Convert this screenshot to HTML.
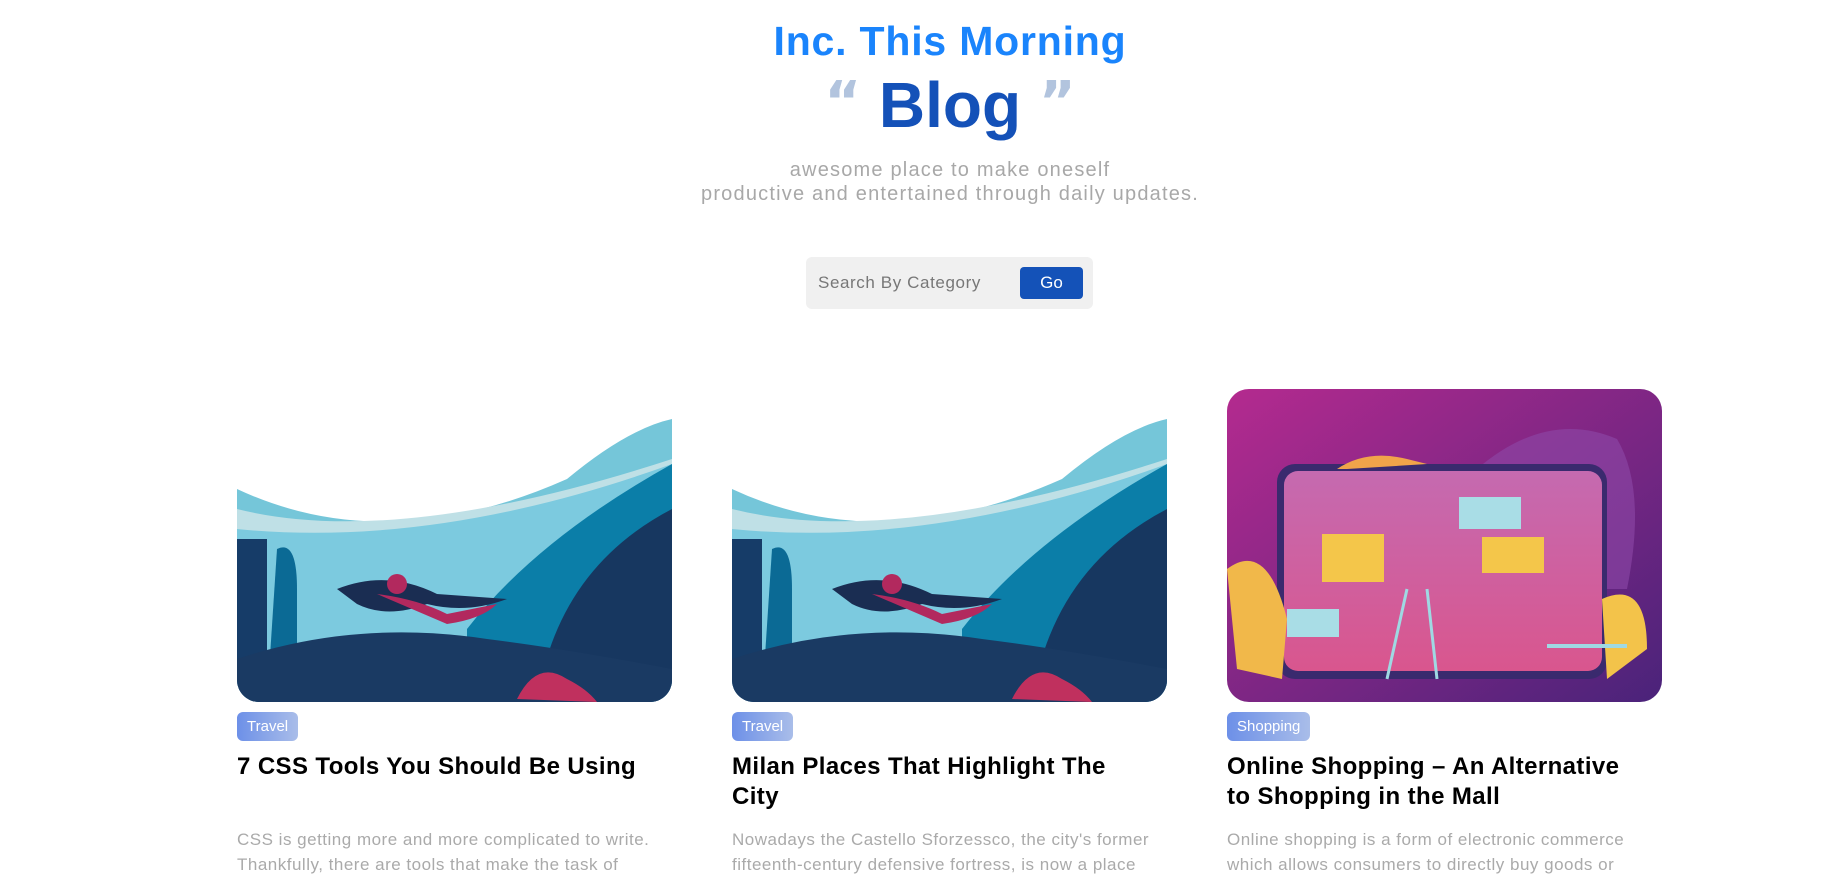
<!DOCTYPE html>
<html><head><meta charset="utf-8"><style>
*{margin:0;padding:0;box-sizing:border-box}
body{width:1843px;height:862px;overflow:hidden;background:#fff;font-family:"Liberation Sans",sans-serif;position:relative}
.a{position:absolute}
h1{position:absolute;left:0;width:1900px;text-align:center;top:18px;font-size:41px;color:#1a84fc;font-weight:bold;letter-spacing:0.8px}
.blog{position:absolute;left:0;width:1900px;text-align:center;top:65px;height:80px;line-height:80px;font-size:64px;font-weight:bold;color:#1451b8}
.q{color:#b2c4de;font-size:56px;position:relative;top:-6px;font-family:"DejaVu Sans",sans-serif;font-weight:bold;line-height:0}
.sub{position:absolute;left:0;width:1900px;text-align:center;top:158px;font-size:20px;color:#a8a8a8;line-height:24px;letter-spacing:1.2px}
.search{left:806px;top:257px;width:287px;height:52px;background:#f0f0f0;border-radius:6px}
.search span{position:absolute;left:12px;top:16px;font-size:17px;color:#777;letter-spacing:0.6px}
.go{position:absolute;left:214px;top:10px;width:63px;height:32px;background:#1452b8;border-radius:4px;color:#fff;font-size:17px;text-align:center;line-height:32px}
.card{position:absolute;top:389px;width:435px}
.img{width:435px;height:313px;border-radius:22px;overflow:hidden}
.tag{display:inline-block;margin-top:10px;height:29px;padding:0 10px;line-height:29px;color:#fff;font-size:15px;border-radius:6px;background:linear-gradient(90deg,#6d90e8,#a9bde9)}
.t{font-size:24px;font-weight:bold;color:#000;line-height:30px;margin-top:11px;height:76px;letter-spacing:0.4px;white-space:nowrap}
.d{font-size:17px;color:#aaa;line-height:25px;margin-top:-1px;letter-spacing:0.5px;white-space:nowrap}
</style></head><body>
<h1>Inc. This Morning</h1>
<div class="blog"><span class="q">“</span> Blog <span class="q">”</span></div>
<div class="sub">awesome place to make oneself<br>productive and entertained through daily updates.</div>
<div class="a search"><span>Search By Category</span><div class="go">Go</div></div>

<svg width="0" height="0" style="position:absolute"><defs>
<g id="sea">
<rect width="435" height="313" fill="#fff"/>
<path d="M0 100 Q150 170 330 90 Q390 40 435 30 V313 H0Z" fill="#75c6d9"/>
<path d="M0 120 Q160 160 435 70 V313 H0Z" fill="#bfe0e6"/>
<path d="M0 140 Q200 160 435 75 V313 H0Z" fill="#7ccadf"/>
<path d="M230 240 Q300 150 435 75 V313 H230Z" fill="#0b7ea8"/>
<path d="M300 313 Q320 180 435 120 V313Z" fill="#173760"/>
<path d="M0 150 H30 V313 H0Z" fill="#163c68"/>
<path d="M40 160 Q60 150 60 200 L60 313 H30Z" fill="#0b6a95"/>
<path d="M0 270 Q120 230 250 250 Q330 260 435 280 V313 H0Z" fill="#1a3a63"/>
<path d="M100 200 Q150 180 200 205 L270 210 Q230 225 190 215 Q150 230 120 215Z" fill="#1a2d52"/>
<path d="M140 205 Q180 210 210 225 L260 215 Q245 230 210 235Z" fill="#b2295e"/>
<circle cx="160" cy="195" r="10" fill="#b2295e"/>
<path d="M280 310 Q300 270 330 290 Q350 300 360 313Z" fill="#c0305e"/>
</g>
</defs></svg>

<div class="card" style="left:237px">
<div class="img"><svg width="435" height="313"><use href="#sea"/></svg></div>
<div class="tag">Travel</div>
<div class="t">7 CSS Tools You Should Be Using</div>
<div class="d">CSS is getting more and more complicated to write.<br>Thankfully, there are tools that make the task of</div>
</div>
<div class="card" style="left:732px">
<div class="img"><svg width="435" height="313"><use href="#sea"/></svg></div>
<div class="tag">Travel</div>
<div class="t">Milan Places That Highlight The<br>City</div>
<div class="d">Nowadays the Castello Sforzessco, the city's former<br>fifteenth-century defensive fortress, is now a place</div>
</div>
<div class="card" style="left:1227px">
<div class="img"><svg width="435" height="313">
<defs><linearGradient id="pg" x1="0" y1="0" x2="1" y2="1"><stop offset="0" stop-color="#b42a8f"/><stop offset="1" stop-color="#4a237a"/></linearGradient>
<linearGradient id="bd" x1="0" y1="0" x2="0" y2="1"><stop offset="0" stop-color="#c56ab0"/><stop offset="1" stop-color="#d9568e"/></linearGradient></defs>
<rect width="435" height="313" fill="url(#pg)"/>
<path d="M250 80 Q320 20 390 50 Q420 100 400 200 L300 200Z" fill="#8e4aa8" opacity=".6"/>
<rect x="50" y="75" width="330" height="215" rx="18" fill="#3a2a6e"/>
<rect x="57" y="82" width="318" height="200" rx="14" fill="url(#bd)"/>
<rect x="95" y="145" width="62" height="48" fill="#f4c64a"/>
<rect x="255" y="148" width="62" height="36" fill="#f4c64a"/>
<rect x="232" y="108" width="62" height="32" fill="#a9dde6"/>
<rect x="60" y="220" width="52" height="28" fill="#a9dde6"/>
<path d="M110 80 Q140 60 180 70 L200 75 L120 80Z" fill="#f1a44a"/>
<path d="M0 180 Q40 150 60 230 L55 290 L10 280Z" fill="#f1b84a"/>
<path d="M375 210 Q420 190 420 260 L380 290Z" fill="#f3c34a"/>
<path d="M160 290 L180 200 M210 290 L200 200" stroke="#9fd9e3" stroke-width="3"/>
<rect x="320" y="255" width="80" height="4" fill="#9fd9e3"/>
</svg></div>
<div class="tag">Shopping</div>
<div class="t">Online Shopping – An Alternative<br>to Shopping in the Mall</div>
<div class="d">Online shopping is a form of electronic commerce<br>which allows consumers to directly buy goods or</div>
</div>
</body></html>
